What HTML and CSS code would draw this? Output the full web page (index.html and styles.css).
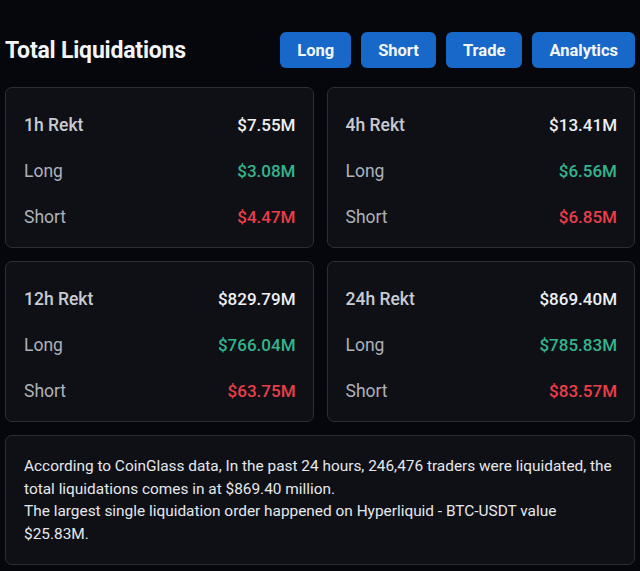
FILE: index.html
```html
<!DOCTYPE html>
<html lang="en">
<head>
<meta charset="utf-8">
<title>Total Liquidations</title>
<link rel="stylesheet" href="styles.css">
</head>
<body>
<div class="wrap">
  <header class="head">
    <h1 class="title">Total Liquidations</h1>
    <nav class="btns">
      <a class="btn">Long</a>
      <a class="btn">Short</a>
      <a class="btn">Trade</a>
      <a class="btn">Analytics</a>
    </nav>
  </header>
  <section class="grid">
    <div class="card">
      <div class="row"><span class="lbl strong">1h Rekt</span><span class="val">$7.55M</span></div>
      <div class="row"><span class="lbl">Long</span><span class="val up">$3.08M</span></div>
      <div class="row"><span class="lbl">Short</span><span class="val down">$4.47M</span></div>
    </div>
    <div class="card">
      <div class="row"><span class="lbl strong">4h Rekt</span><span class="val">$13.41M</span></div>
      <div class="row"><span class="lbl">Long</span><span class="val up">$6.56M</span></div>
      <div class="row"><span class="lbl">Short</span><span class="val down">$6.85M</span></div>
    </div>
    <div class="card">
      <div class="row"><span class="lbl strong">12h Rekt</span><span class="val">$829.79M</span></div>
      <div class="row"><span class="lbl">Long</span><span class="val up">$766.04M</span></div>
      <div class="row"><span class="lbl">Short</span><span class="val down">$63.75M</span></div>
    </div>
    <div class="card">
      <div class="row"><span class="lbl strong">24h Rekt</span><span class="val">$869.40M</span></div>
      <div class="row"><span class="lbl">Long</span><span class="val up">$785.83M</span></div>
      <div class="row"><span class="lbl">Short</span><span class="val down">$83.57M</span></div>
    </div>
  </section>
  <section class="note">
    <p>According to CoinGlass data, In the past 24 hours, 246,476 traders were liquidated, the total liquidations comes in at $869.40 million.</p>
    <p>The largest single liquidation order happened on Hyperliquid - BTC-USDT value $25.83M.</p>
  </section>
</div>
</body>
</html>
```
FILE: styles.css
```css
* { box-sizing: border-box; }
html, body { margin: 0; padding: 0; }
body {
  background: #05070c;
  color: #e9ebef;
  font-family: Roboto, "Noto Sans", "Liberation Sans", sans-serif;
  width: 640px;
  height: 571px;
  overflow: hidden;
}
.wrap { padding: 32px 5px 0 5px; }
.head {
  display: flex;
  justify-content: space-between;
  align-items: center;
  height: 36px;
}
.title {
  margin: 0;
  font-size: 23px;
  font-weight: 700;
  color: #f3f4f6;
  letter-spacing: -0.2px;
}
.btns { display: flex; gap: 10px; }
.btn {
  display: flex;
  align-items: center;
  justify-content: center;
  height: 36px;
  padding: 0 17px;
  background: #1768c8;
  border-radius: 6px;
  color: #f4f7fb;
  font-size: 16.5px;
  font-weight: 700;
}
.grid {
  margin-top: 19px;
  display: grid;
  grid-template-columns: 1fr 1fr;
  column-gap: 13px;
  row-gap: 13px;
}
.card {
  background: #0e1016;
  border: 1px solid #2a2e37;
  border-radius: 7px;
  height: 161px;
  padding: 25px 17px 0 18px;
  display: flex;
  flex-direction: column;
  gap: 22px;
}
.row {
  display: flex;
  justify-content: space-between;
  align-items: center;
  height: 24px;
  font-size: 17px;
}
.lbl { color: #aeb2ba; font-size: 17.5px; }
.lbl.strong { color: #c8cbd2; font-weight: 500; }
.val { color: #eef0f3; font-weight: 500; }
.val.up { color: #35b48d; }
.val.down { color: #ec3e48; }
.note {
  margin-top: 13px;
  background: #0e1016;
  border: 1px solid #2a2e37;
  border-radius: 7px;
  height: 130px;
  padding: 19px 18px;
  font-size: 15.4px;
  line-height: 22.7px;
  color: #e6e8ec;
}
.note p { margin: 0; }
```
